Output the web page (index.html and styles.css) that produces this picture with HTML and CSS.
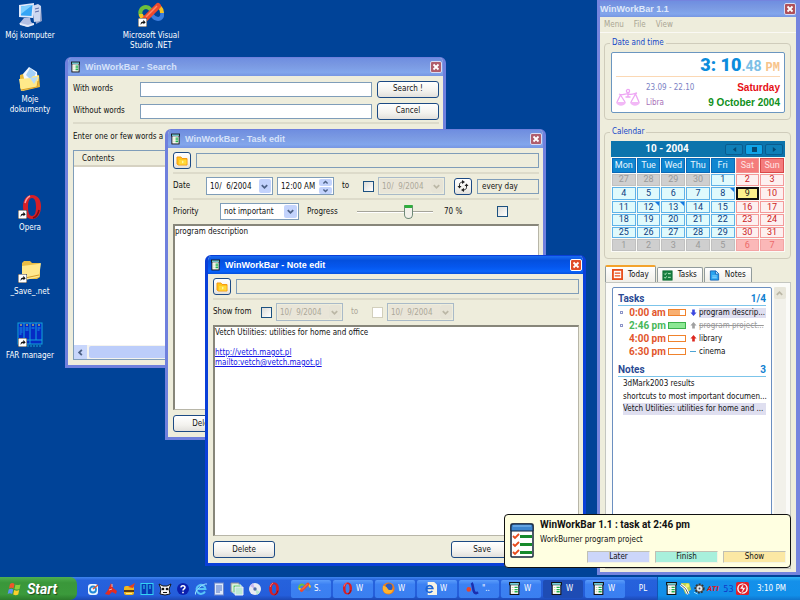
FILE: index.html
```
<!DOCTYPE html>
<html lang="en">
<head>
<meta charset="utf-8">
<title>WinWorkBar 1.1</title>
<link rel="stylesheet" href="styles.css">
</head>
<body>
<svg class="defs" aria-hidden="true">
  <symbol id="i-app" viewBox="0 0 10 12">
    <rect x="1" y="1" width="8" height="10.500" fill="#fff" stroke="#111"/>
    <rect x="0" y="0" width="10" height="3" fill="#111"/><rect x="1" y="1" width="8" height="1.500" fill="#7fe0e8"/>
    <path d="M2.500 5h1.500M2.500 7h1.500M2.500 9h1.500" stroke="#c9d9a0"/><path d="M5 5h3M5 7h3M5 9h3" stroke="#22b14c" stroke-width="1.300"/>
  </symbol>
  <symbol id="i-folder" viewBox="0 0 12 12">
    <path d="M1 2h4l1 1.500h5V10H2.500L1 9z" fill="#ffc61a" stroke="#f59a14"/><path d="M3 5h7.500v4.500H3z" fill="#ffd83a"/><path d="M6 5.500l2 1.500-2 1.500z" fill="#fff6a0"/>
  </symbol>
  <symbol id="i-x" viewBox="0 0 10 10"><path d="M2.500 2.500l5 5M7.500 2.500l-5 5" stroke="#fff" stroke-width="1.800"/></symbol>
  <symbol id="i-down" viewBox="0 0 10 10"><path d="M2 3.500l3 3 3-3" fill="none" stroke="currentColor" stroke-width="2"/></symbol>
  <symbol id="i-link" viewBox="0 0 10 10"><rect width="10" height="10" fill="#fff" stroke="#222"/><path d="M3 8c-.5-3 1-4 3-4V2l2.500 3L6 7V5.500C4.500 5.500 3.500 6.500 3 8z" fill="#111"/></symbol>
  <symbol id="i-pc" viewBox="0 0 26 26">
    <path d="M17 6l7-2 1 15-6 3z" fill="#8f9fc8"/><path d="M15 4l6-2 3 2-1 15-6 1z" fill="#cdd8f0"/><path d="M18 7l4-1M18 10l4-1" stroke="#5a6ca8"/>
    <path d="M2 3l15-2-1 15L2 15z" fill="#dfe9fb"/><path d="M4 4.500L15.500 3l-1 11L4 13.500z" fill="#35a5f5"/><path d="M4 4.500L15.500 3 4 12z" fill="#7fd0ff"/>
    <path d="M7 16h6l1 4 3 2-7 3-8-3z" fill="#b3bfe3"/><path d="M3 21l8 2 6-2v2l-6 2-8-2z" fill="#e2e8f8"/>
  </symbol>
  <symbol id="i-docs" viewBox="0 0 26 26">
    <path d="M3 9l6-2 2 3 11-1 1 12-17 4-3-3z" fill="#e8b93a"/><path d="M12 1l8 5 1 12-12 3L6 8z" fill="#f4f8ff"/><path d="M13 2l6 5-4 8-6-6z" fill="#a4d0f8"/>
    <path d="M2 13l12-1 2-2h6l-2 11-16 4z" fill="#ffe98a"/><path d="M4 24l16-3 1-6" fill="none" stroke="#d99c22"/><path d="M13 12l8-1-4 7z" fill="#b9dcf8"/>
  </symbol>
  <symbol id="i-vs" viewBox="0 0 26 26">
    <g fill="none" stroke-width="4"><path d="M3 14C1 9 4 5 8 5c3 0 4 2 6 4" stroke="#6cbf3c"/><path d="M14 13c2 3 4 4 6 4 3 0 5-3 4-7" stroke="#3b7ddd"/><path d="M3 12c0 4 4 5 7 2" stroke="#f7c21f"/><path d="M18 5c3-1 6 1 6 6" stroke="#f7c21f"/></g>
    <path d="M7 17L20 4" stroke="#ee4a2d" stroke-width="6" stroke-linecap="round"/><path d="M8 15L19 4" stroke="#ff8a66" stroke-width="1.500"/>
  </symbol>
  <symbol id="i-opera" viewBox="0 0 26 26">
    <path fill-rule="evenodd" d="M15 1c6 0 9 5 9 11.500S21 25 15 25 6 19 6 12.500 9 1 15 1zm0 3c-3 0-4 4-4 9s1 9 4 9 4-4 4-9-1-9-4-9z" fill="#d81f26"/><path d="M8 9c1-4 3-6 5-7" stroke="#ff9a9a" stroke-width="1.500" fill="none"/><path d="M22 16c-1 5-3 7-6 8" stroke="#7d0c12" stroke-width="1.500" fill="none"/>
  </symbol>
  <symbol id="i-save" viewBox="0 0 26 26">
    <path d="M5 5l2-2h6l2 2h8v14l-3 2H5z" fill="#e9bd45"/><path d="M5 8l16-2 3-1-2 14-14 3-3-2z" fill="#ffe88d"/><path d="M8 20l14-3" stroke="#d39c2b"/>
  </symbol>
  <symbol id="i-far" viewBox="0 0 26 26">
    <rect x="1" y="1" width="24" height="21" fill="#052cc4" stroke="#12a4da"/><path d="M7 1v17M13 1v21M19 1v17M1 18h24" stroke="#16a4dc"/><path d="M3 3h2M9 3h2M15 3h2M21 3h2" stroke="#ffe14a"/>
    <path d="M2.500 6h3M2.500 8h3M2.500 10h3M2.500 12h2M8.500 6h3M8.500 8h3M14.500 6h3M20.500 6h3M20.500 8h2" stroke="#1d9bf0"/><path d="M1 24h24" stroke="#1b9fd8" stroke-dasharray="2 1"/>
  </symbol>
  <symbol id="i-flag" viewBox="0 0 16 16">
    <path d="M3 3c2-1.500 3-1 4.500 0L6.500 7.500C5 6.500 4 6.500 2 7.500z" fill="#f0562a"/><path d="M8.500 3.500c2 1 3 .5 5 0L12.500 8c-2 .7-3 .7-5 0z" fill="#8ccf3c"/><path d="M1.700 8.500c2-1 3-1 4.500 0l-1 4.500c-2-1-3-1-4.500 0z" fill="#5a94f5"/><path d="M7.200 9c2 1 3 1 5 0l-1 4.500c-2 1-3 .8-5 0z" fill="#fbd02c"/>
  </symbol>
  <symbol id="i-mail" viewBox="0 0 14 14"><rect x="2" y="2" width="10" height="11" rx="3" fill="#e8f4ff"/><circle cx="7" cy="7.500" r="3" fill="none" stroke="#1f88d8" stroke-width="1.800"/><path d="M7 7l5-4" stroke="#e8542c" stroke-width="1.500"/></symbol>
  <symbol id="i-red" viewBox="0 0 14 14"><path d="M7 1l2 5 4 3-1 3-4-2-3 3-4-1 3-4z" fill="#e22c22"/><path d="M5 8l3-1M8 2v3" stroke="#ffb0a0"/></symbol>
  <symbol id="i-burn" viewBox="0 0 14 14"><rect x="2" y="4" width="10" height="9" rx="2" fill="#f1b91e"/><path d="M2 8h10v2H2z" fill="#5a3a12"/><path d="M6 5l7-4-2 5z" fill="#e53f1f"/><path d="M4 11.500h6" stroke="#ffe88a"/></symbol>
  <symbol id="i-panels" viewBox="0 0 14 14"><rect x="1" y="1.500" width="12" height="11" fill="#0838b8" stroke="#35d4f4"/><path d="M7 1v12M3 4h2M3 6h2M9 4h2M9 6h2" stroke="#35d4f4"/></symbol>
  <symbol id="i-cow" viewBox="0 0 14 14"><path d="M1 2l4 2h4l4-2-2 5 1 5-5 1-5-1 1-5z" fill="#f3f3f3" stroke="#151515"/><circle cx="5" cy="7" r="1.300" fill="#111"/><circle cx="9" cy="7" r="1.300" fill="#111"/><path d="M5 10.500h4" stroke="#111"/></symbol>
  <symbol id="i-help" viewBox="0 0 14 14"><circle cx="7" cy="7" r="6" fill="#0b1fae"/><path d="M5 5.500c0-2.500 4-2.500 4 0 0 1.300-2 1.500-2 3M7 9.700v1.600" fill="none" stroke="#fff" stroke-width="1.500"/></symbol>
  <symbol id="i-ie" viewBox="0 0 14 14"><path d="M11 9.500A4.500 4.500 0 1 1 11.500 7H4" fill="none" stroke="#58c4f8" stroke-width="2"/><path d="M1.500 12.500C0 9 9 1 13 2" fill="none" stroke="#9fe0ff"/></symbol>
  <symbol id="i-note" viewBox="0 0 14 14"><rect x="2.500" y="1" width="9" height="12" fill="#dce8fb" stroke="#6c86c8"/><path d="M4 4h6M4 6h6M4 8h6M4 10h4" stroke="#4c72c8"/></symbol>
  <symbol id="i-pics" viewBox="0 0 14 14"><path d="M1 1h8v9H1z" fill="#d8e8c8" stroke="#889"/><path d="M3 3h8v8H3z" fill="#60c068" stroke="#dfe"/><path d="M5 5h8v8H5z" fill="#bce8d4" stroke="#eef"/></symbol>
  <symbol id="i-cd" viewBox="0 0 14 14"><circle cx="7" cy="7" r="6" fill="#e9ecf2"/><path d="M7 7L2 4l3-3z" fill="#c8b8f0"/><path d="M7 7l5 3-3 3z" fill="#b8e8d0"/><circle cx="7" cy="7" r="1.700" fill="#5470a8"/></symbol>
  <symbol id="i-fox" viewBox="0 0 14 14"><circle cx="7" cy="7" r="6.500" fill="#ee7d18"/><circle cx="7.500" cy="5.500" r="3.800" fill="#2a5cc4"/><path d="M1 4c2 0 4 1 5 3s3 2 6 1c-1 6-10 6-11 0z" fill="#ffb32c"/></symbol>
  <symbol id="i-page" viewBox="0 0 14 14"><path d="M4 0h7l3 3v11H4z" fill="#f7f4e4"/><path d="M9 9.500A3.600 3.600 0 1 1 9.500 7H3" fill="none" stroke="#1c66d8" stroke-width="1.800"/></symbol>
  <symbol id="i-lambda" viewBox="0 0 14 14"><path d="M6 1c2 2 1 7 3 10 1 1.500 2.500 1 4 0" fill="none" stroke="#1a2fb0" stroke-width="2.800"/><circle cx="3" cy="8" r="2.500" fill="#e8452c"/></symbol>
  <symbol id="i-tool" viewBox="0 0 14 14"><path d="M2 1h9l2 7-6 5z" fill="#b9cf52"/><path d="M2 3l5 4 3 6" stroke="#fff" stroke-width="3" fill="none"/><path d="M2 3l5 4 3 6" stroke="#555" fill="none"/><circle cx="9" cy="4" r="2" fill="#f3ef6e"/></symbol>
  <symbol id="i-gear" viewBox="0 0 14 14"><circle cx="7" cy="7" r="4.500" fill="#6c7478" stroke="#333" stroke-width="2" stroke-dasharray="2 1.300"/><circle cx="7" cy="7" r="3" fill="#dfe6ea"/><circle cx="7" cy="7" r="1" fill="#445"/><path d="M1 11l4 2" stroke="#9fe8ff"/></symbol>
  <symbol id="i-zap" viewBox="0 0 14 14"><rect width="14" height="14" rx="2" fill="#e0202a"/><circle cx="7" cy="7" r="5" fill="none" stroke="#fff" stroke-width="1.500"/><path d="M9 0L4 7.500H7L5 14 10.500 6H7.500z" fill="#fff" stroke="#e0202a" stroke-width=".6"/></symbol>
  <symbol id="i-scales" viewBox="0 0 24 20"><g fill="none" stroke="#eea6f4" stroke-width="1.300"><circle cx="12" cy="3" r="1.600"/><path d="M3 6c4 2 5-1 9 0 4 1 5 0 9-1M12 4.500V9M9.500 9h5M4.500 7L1 14M4.500 7L9 14M19.500 6L15 14M19.500 6L23 14"/></g><path d="M0 14h10c-1 5-9 5-10 0zM14 14h10c-1 5-9 5-10 0z" fill="#f2b8f6"/></symbol>
  <symbol id="i-today" viewBox="0 0 12 12"><rect x="1" y="1" width="10" height="10" fill="#fff" stroke="#e8501c" stroke-width="2"/><path d="M3 4.500h6M3 7.500h6" stroke="#e8501c" stroke-width="1.500"/></symbol>
  <symbol id="i-tasks" viewBox="0 0 12 12"><rect x="1" y="1" width="10" height="10" fill="#178040" stroke="#0b6b32"/><path d="M2.500 4l1 1 1.500-2M2.500 8l1 1 1.500-2M6.500 4h3M6.500 8h3" fill="none" stroke="#c8f4d0"/></symbol>
  <symbol id="i-notes" viewBox="0 0 12 12"><path d="M1.500 1h6L10.500 4v7h-9z" fill="#28a4f0" stroke="#1264b8"/><path d="M7 1v3.500h3.500" fill="#dff2ff" stroke="#1264b8"/><path d="M3.500 6.500h5M3.500 8.500h5" stroke="#9bdcff"/></symbol>
  <symbol id="i-arrow" viewBox="0 0 8 8"><path d="M4 0l3.500 4H5.500v3.500h-3V4H.5z" fill="currentColor"/></symbol>
  <symbol id="i-alert" viewBox="0 0 24 36">
    <rect x="1" y="2" width="22" height="33" rx="1" fill="#fff" stroke="#15233a" stroke-width="1.500"/><path d="M1 9V5c0-2 1-3 3-3h16c2 0 3 1 3 3v4z" fill="#3d86cf" stroke="#15233a"/><path d="M3 4h18" stroke="#8cc2f2"/>
    <path d="M10 14.500h12M10 22.500h12M10 30.500h12" stroke="#178a2c" stroke-width="3"/><path d="M3 14l2 2 4-4M3 22l2 2 4-4M3 30l2 2 4-4" fill="none" stroke="#e84a1c" stroke-width="1.800"/>
  </symbol>
  <symbol id="i-repeat" viewBox="0 0 12 12"><g fill="none" stroke="#222"><path d="M2.500 7V4.500C2.500 3 4 2 6 2M9.500 5v2.500C9.500 9 8 10 6 10"/></g><path d="M5 0l3 2-3 2zM7 8l-3 2 3 2zM.5 6h4l-2 2.500zM7.500 6h4l-2-2.500z" fill="#222"/></symbol>
</svg>

<div class="screen">
  <main class="desktop">
    <div class="shortcuts">
      <a class="shortcut" href="#"><svg class="big"><use href="#i-pc"/></svg><span>Mój komputer</span></a>
      <a class="shortcut" href="#"><svg class="big"><use href="#i-vs"/></svg><svg class="mark"><use href="#i-link"/></svg><span>Microsoft Visual Studio .NET</span></a>
      <a class="shortcut first" href="#"><svg class="big"><use href="#i-docs"/></svg><span>Moje<br>dokumenty</span></a>
      <a class="shortcut first row4" href="#"><svg class="big"><use href="#i-opera"/></svg><svg class="mark"><use href="#i-link"/></svg><span>Opera</span></a>
      <a class="shortcut first row5" href="#"><svg class="big"><use href="#i-save"/></svg><svg class="mark"><use href="#i-link"/></svg><span>_Save_.net</span></a>
      <a class="shortcut first row6" href="#"><svg class="big"><use href="#i-far"/></svg><svg class="mark"><use href="#i-link"/></svg><span>FAR manager</span></a>
    </div>

    <section class="window search">
      <header class="title"><svg class="app"><use href="#i-app"/></svg><h2>WinWorkBar - Search</h2><button class="close" aria-label="Close"><svg><use href="#i-x"/></svg></button></header>
      <form class="body">
        <div class="row find"><label for="with">With words</label><input class="field" id="with" type="text"><button class="btn" type="button">Search !</button></div>
        <div class="row find"><label for="without">Without words</label><input class="field" id="without" type="text"><button class="btn" type="button">Cancel</button></div>
        <hr>
        <p class="hint">Enter one or few words a</p>
        <div class="results">
          <div class="colhead">Contents</div>
          <div class="void"></div>
          <div class="hscroll"><button type="button" aria-label="Scroll left"><svg class="turn"><use href="#i-down"/></svg></button><i></i></div>
        </div>
      </form>
    </section>

    <section class="window task">
      <header class="title"><svg class="app"><use href="#i-app"/></svg><h2>WinWorkBar - Task edit</h2><button class="close" aria-label="Close"><svg><use href="#i-x"/></svg></button></header>
      <form class="body">
        <div class="row"><button class="btn tool" type="button" aria-label="Folder"><svg><use href="#i-folder"/></svg></button><input class="field flat" type="text" aria-label="Category"></div>
        <hr>
        <div class="row">
          <label class="lead" for="d1">Date</label>
          <span class="combo"><input id="d1" type="text" value="10/  6/2004"><button type="button" aria-label="Pick date"><svg><use href="#i-down"/></svg></button></span>
          <span class="combo time"><input type="text" value="12:00 AM" aria-label="Time"><span class="spin"><button type="button" aria-label="Up"><svg class="flip"><use href="#i-down"/></svg></button><button type="button" aria-label="Down"><svg><use href="#i-down"/></svg></button></span></span>
          <label class="to" for="c1">to</label><input id="c1" type="checkbox">
          <span class="combo off"><input type="text" value="10/  9/2004" aria-label="End date" disabled><button type="button" aria-label="Pick date" disabled><svg><use href="#i-down"/></svg></button></span>
          <button class="btn tool repeat" type="button" aria-label="Repeat"><svg><use href="#i-repeat"/></svg></button>
          <input class="field flat" type="text" value="every day" aria-label="Repeat rule">
        </div>
        <hr>
        <div class="row">
          <label class="lead wide" for="prio">Priority</label>
          <span class="picker"><select id="prio"><option>not important</option></select><svg><use href="#i-down"/></svg></span>
          <label class="prog" for="pr">Progress</label><input id="pr" type="range" min="0" max="100" value="70">
          <output for="pr">70 %</output><input class="done" type="checkbox" aria-label="Done">
        </div>
        <textarea class="memo" aria-label="Description">program description</textarea>
        <div class="row foot"><button class="btn" type="button">Delete</button><button class="btn" type="button">Save</button></div>
      </form>
    </section>

    <section class="window note">
      <header class="title"><svg class="app"><use href="#i-app"/></svg><h2>WinWorkBar - Note edit</h2><button class="close" aria-label="Close"><svg><use href="#i-x"/></svg></button></header>
      <form class="body">
        <div class="row"><button class="btn tool" type="button" aria-label="Folder"><svg><use href="#i-folder"/></svg></button><input class="field flat" type="text" aria-label="Category"></div>
        <hr>
        <div class="row">
          <label class="from" for="c2">Show from</label><input id="c2" type="checkbox">
          <span class="combo off"><input type="text" value="10/  9/2004" aria-label="Start date" disabled><button type="button" aria-label="Pick date" disabled><svg><use href="#i-down"/></svg></button></span>
          <label class="to dim" for="c3">to</label><input id="c3" type="checkbox" disabled>
          <span class="combo off"><input type="text" value="10/  9/2004" aria-label="End date" disabled><button type="button" aria-label="Pick date" disabled><svg><use href="#i-down"/></svg></button></span>
        </div>
        <div class="memo"><p>Vetch Utilities: utilities for home and office</p><p>&nbsp;</p><p><a href="#">http://vetch.magot.pl</a></p><p><a href="#">mailto:vetch@vetch.magot.pl</a></p></div>
        <div class="row foot"><button class="btn" type="button">Delete</button><span class="grow"></span><button class="btn" type="button">Save</button><button class="btn" type="button">Cancel</button></div>
      </form>
    </section>
  </main>

  <aside class="sidebar">
    <header class="title"><h1>WinWorkBar 1.1</h1><button class="close" aria-label="Close"><svg><use href="#i-x"/></svg></button></header>
    <nav class="menu"><button>Menu</button><button>File</button><button>View</button></nav>
    <div class="panel">
      <fieldset><legend>Date and time</legend>
        <div class="clock">
          <time class="lcd"><b>3: 10</b><span>.48</span><small>PM</small></time>
          <div class="zodiac"><svg><use href="#i-scales"/></svg>
            <p class="sign"><span>23.09 - 22.10</span><em>Libra</em></p>
            <p class="today"><b>Saturday</b><strong>9 October 2004</strong></p></div>
        </div>
      </fieldset>
      <fieldset class="calbox"><legend>Calendar</legend>
        <div class="month"><b>10 - 2004</b><button aria-label="Previous month"><svg viewBox="0 0 6 6"><path d="M5 0v6L1 3z"/></svg></button><button class="on" aria-label="Today"><svg viewBox="0 0 6 6"><path d="M0 0h6v6H0z"/></svg></button><button aria-label="Next month"><svg viewBox="0 0 6 6"><path d="M1 0v6l4-3z"/></svg></button></div>
        <table class="cal">
          <thead><tr><th>Mon</th><th>Tue</th><th>Wed</th><th>Thu</th><th>Fri</th><th>Sat</th><th>Sun</th></tr></thead>
          <tbody>
            <tr><td class="o">27</td><td class="o">28</td><td class="o">29</td><td class="o">30</td><td>1</td><td>2</td><td>3</td></tr>
            <tr><td>4</td><td>5</td><td>6</td><td>7</td><td class="n">8</td><td class="now">9</td><td>10</td></tr>
            <tr><td>11</td><td class="n">12</td><td class="n">13</td><td>14</td><td>15</td><td>16</td><td>17</td></tr>
            <tr><td>18</td><td>19</td><td>20</td><td>21</td><td>22</td><td>23</td><td>24</td></tr>
            <tr><td>25</td><td>26</td><td>27</td><td>28</td><td>29</td><td>30</td><td>31</td></tr>
            <tr><td class="o">1</td><td class="o">2</td><td class="o">3</td><td class="o">4</td><td class="o">5</td><td class="o">6</td><td class="o">7</td></tr>
          </tbody>
        </table>
      </fieldset>
      <div class="tabs"><button class="sel"><svg><use href="#i-today"/></svg>Today</button><button><svg><use href="#i-tasks"/></svg>Tasks</button><button><svg><use href="#i-notes"/></svg>Notes</button></div>
      <div class="sheet">
        <div class="list">
          <h3>Tasks<span>1/4</span></h3>
          <ul class="tasks">
            <li><i class="dot"></i><b>0:00 am</b><i class="bar part"></i><svg class="down"><use href="#i-arrow"/></svg><span class="hot">program descrip...</span></li>
            <li class="ok"><i class="dot"></i><b>2:46 pm</b><i class="bar"></i><svg><use href="#i-arrow"/></svg><s>program project...</s></li>
            <li><i></i><b>4:00 pm</b><i class="bar"></i><svg class="up"><use href="#i-arrow"/></svg><span>library</span></li>
            <li><i></i><b>6:30 pm</b><i class="bar"></i><i class="dash"></i><span>cinema</span></li>
          </ul>
          <h3>Notes<span>3</span></h3>
          <ul class="notes"><li>3dMark2003 results</li><li>shortcuts to most important documen...</li><li class="hot">Vetch Utilities: utilities for home and ...</li></ul>
        </div>
        <div class="vscroll"><button aria-label="Scroll up"><svg class="flip"><use href="#i-down"/></svg></button></div>
      </div>
    </div>
  </aside>

  <section class="popup">
    <svg><use href="#i-alert"/></svg>
    <div><h2>WinWorkBar 1.1 : task at 2:46 pm</h2><p>WorkBurner program project</p>
    <div class="acts"><button class="later">Later</button><button class="finish">Finish</button><button class="show">Show</button></div></div>
  </section>
</div>

<footer class="taskbar">
  <button class="start"><svg><use href="#i-flag"/></svg>Start</button>
  <div class="quick">
    <svg><use href="#i-mail"/></svg><svg><use href="#i-red"/></svg><svg><use href="#i-burn"/></svg><svg><use href="#i-panels"/></svg><svg><use href="#i-cow"/></svg><svg><use href="#i-help"/></svg><svg><use href="#i-ie"/></svg><svg><use href="#i-note"/></svg><svg><use href="#i-pics"/></svg><svg><use href="#i-cd"/></svg><svg><use href="#i-opera"/></svg>
  </div>
  <div class="running">
    <button><svg><use href="#i-vs"/></svg>S.</button><button><svg><use href="#i-opera"/></svg>W</button><button><svg><use href="#i-fox"/></svg>W</button><button><svg><use href="#i-page"/></svg>W</button><button><svg><use href="#i-lambda"/></svg>"..</button><button><svg><use href="#i-app"/></svg>W</button><button class="cur"><svg><use href="#i-app"/></svg>W</button><button><svg><use href="#i-app"/></svg>W</button>
  </div>
  <span class="lang">PL</span>
  <div class="tray"><svg><use href="#i-app"/></svg><svg><use href="#i-tool"/></svg><svg><use href="#i-gear"/></svg><b class="ati">ATI</b><span class="temp">53</span><svg><use href="#i-zap"/></svg><time>3:10 PM</time></div>
</footer>
</body>
</html>
```
FILE: styles.css
```
:root {
  --face: #eeeddc;
  --edge: #7f9db9;
  --ui: "DejaVu Sans Condensed", "DejaVu Sans", sans-serif;
  --head: Roboto, "Liberation Sans", sans-serif;
}
* { box-sizing: border-box; margin: 0; padding: 0; }
body { min-height: 100vh; display: flex; flex-direction: column; background: #004398; color: #111; font: 8px/10px var(--ui); overflow: hidden; }
button, input, select, textarea { font: inherit; color: inherit; border: 0; background: none; appearance: none; min-width: 0; }
svg { display: block; flex: none; }
ul { list-style: none; }
i { font-style: normal; }
.defs { position: absolute; width: 0; height: 0; }

.screen { flex: 1; display: flex; position: relative; min-height: 0; }
.desktop { flex: 1; }

/* desktop shortcuts */
.shortcuts { display: grid; grid-template-columns: 60px 62px; grid-auto-rows: 64px; column-gap: 60px; padding-top: 2px; }
.shortcut { display: flex; flex-direction: column; align-items: center; gap: 3px; position: relative; color: #fff; text-align: center; text-decoration: none; }
.shortcut.first { grid-column: 1; }
.shortcut.row4 { grid-row: 4; }
.shortcut.row5 { grid-row: 5; }
.shortcut.row6 { grid-row: 6; }
.big { width: 26px; height: 26px; }
.mark { position: absolute; left: 18px; top: 16px; width: 9px; height: 9px; }

/* windows */
.window { position: absolute; width: 381px; height: 311px; display: flex; flex-direction: column; border: 3px solid #6f80dd; border-top-width: 1px; border-radius: 6px 6px 0 0; background: var(--face); overflow: hidden; }
.search { left: 65px; top: 57px; }
.task { left: 165px; top: 129px; }
.note { left: 205px; top: 255px; border-color: #0a3fd8; }
.title { display: flex; align-items: center; gap: 5px; height: 18px; padding: 0 1px 0 3px; background: linear-gradient(#6f8ee0, #7a99e2 40%, #82a6ec 80%, #7696e2); color: #d6e2fa; }
.title h1, .title h2 { flex: 1; font: bold 9px/12px "Liberation Sans", sans-serif; }
.note .title { background: linear-gradient(#1b6cf0, #0450de 25%, #0557ee 60%, #0863fb 85%, #0550dc); color: #fff; }
.app { width: 9px; height: 12px; }
.close { width: 12px; height: 12px; border: 1px solid #d8dcf4; border-radius: 2px; background: #b05d6c; }
.close svg { width: 10px; height: 10px; }
.note .close { border-color: #fff; background: #e04b27; }
.body { flex: 1; display: flex; flex-direction: column; padding: 4px 4px 5px 5px; min-height: 0; }
.row { display: flex; align-items: center; flex: none; }
hr { flex: none; height: 2px; border: 0; background: #dddbca; margin: 3px 0; }
.field { flex: 1; height: 15px; border: 1px solid var(--edge); background: #fff; padding: 0 4px; }
.field.flat { background: transparent; }
.btn { display: flex; align-items: center; justify-content: center; width: 62px; height: 17px; border: 1px solid #1c4a84; border-radius: 3px; background: linear-gradient(#fff, #f3f2ee 60%, #e2e0dc); text-align: center; }
.btn.tool { width: 18px; margin-right: 5px; }
.tool svg { width: 12px; height: 12px; }
input[type="checkbox"] { flex: none; width: 11px; height: 11px; border: 1px solid #1c5180; background: linear-gradient(135deg, #dcdcd7, #fff); }
input[type="checkbox"]:disabled { border-color: #d2cfbc; background: #fff; }

.find { height: 22px; }
.find label { width: 67px; }
.find .btn { margin-left: 5px; }
.find + hr { margin: 0 0 8px; }
.search .body { padding-top: 2px; }
.hint { white-space: nowrap; }
.results { flex: 1; display: flex; flex-direction: column; margin: 8px 0 0; border: 1px solid var(--edge); background: #fff; }
.colhead { height: 16px; padding: 3px 8px; background: var(--face); border-bottom: 2px solid #d6d2c2; }
.void { flex: 1; }
.hscroll { display: flex; height: 14px; background: #f4f3ee; }
.hscroll button { width: 13px; padding: 2px; background: #c8d6fb; color: #4d6185; }
.hscroll i { flex: 1; margin: 1px 0 1px 2px; background: #bccdfa; border-radius: 2px; }
.hscroll svg, .combo svg { width: 9px; height: 9px; }
.turn { transform: rotate(90deg); }
.flip { transform: rotate(180deg); }

.lead { width: 33px; }
.lead.wide { width: 47px; }
.combo { flex: none; display: flex; align-items: center; width: 67px; height: 18px; border: 1px solid var(--edge); background: #fff; padding: 1px; white-space: pre; }
.combo input { flex: 1; padding-left: 2px; height: 14px; white-space: pre; }
.combo button { flex: none; width: 12px; height: 14px; padding: 2px 1px; border-radius: 2px; background: #c3d3fc; color: #4d6185; }
.combo.time { width: 57px; margin-left: 4px; }
.spin { display: flex; flex-direction: column; gap: 1px; }
.combo .spin button { width: 13px; height: 7px; padding: 0 2px; }
.spin svg { height: 7px; }
.off { background: var(--face); color: #aca899; border-color: #a9bac8; }
.off input { background: #e9e5d8; }
.combo.off button { background: #e6e3d6; color: #bbb7a6; }
.to { width: 29px; padding-left: 8px; }
.to.dim { color: #aca899; }
input[type="checkbox"] + .combo { margin-left: 4px; }
.btn.repeat { margin-left: 9px; }
.picker { display: flex; align-items: center; position: relative; width: 79px; height: 17px; border: 1px solid var(--edge); background: #fff; }
.picker select { flex: 1; width: 100%; height: 15px; padding-left: 3px; }
.picker svg { position: absolute; right: 1px; top: 1px; width: 13px; height: 13px; padding: 2px; border-radius: 2px; background: #c3d3fc; color: #4d6185; pointer-events: none; }
.prog { margin-left: 8px; width: 50px; }
input[type="range"] { width: 76px; height: 17px; margin-right: 11px; }
input[type="range"]::-webkit-slider-runnable-track { height: 2px; background: #a5a49a; border-bottom: 1px solid #fff; }
input[type="range"]::-webkit-slider-thumb { appearance: none; width: 9px; height: 14px; margin-top: -6px; border: 1px solid #6f8a78; border-top: 3px solid #2fae3c; border-radius: 1px 1px 5px 5px; background: #f2f1ea; }
output { width: 53px; }
.memo { flex: 1; margin-top: 4px; border: 1px solid #b8b6a8; border-top: 2px solid #87867a; border-left: 2px solid #87867a; background: #fff; resize: none; line-height: 10px; }
.task .memo, .note .memo { padding-top: 1px; }
.memo a { color: #1414e6; }
.foot { padding-top: 5px; gap: 4px; }
.from { width: 48px; }
.grow { flex: 1; }

/* docked bar */
.sidebar { flex: none; width: 203px; display: flex; flex-direction: column; margin-bottom: 2px; border: solid #7484de; border-width: 1px 4px 3px 3px; background: var(--face); min-height: 0; }
.sidebar .title { height: 16px; padding: 0; color: #dfe8fb; }
.sidebar .close { background: #b05058; }
.menu { display: flex; gap: 10px; height: 16px; padding: 2px 4px; color: #aaa593; border-bottom: 1px solid #faf9f4; }
.panel { flex: 1; display: flex; flex-direction: column; padding: 5px 5px 3px 4px; min-height: 0; }
fieldset { flex: none; border: 1px solid #cfccbb; border-radius: 4px; padding: 4px 5px 6px 6px; }
legend { margin-left: -1px; padding: 0 2px; color: #1447c8; }
.clock { border: 1px solid #6b96c0; border-radius: 2px; background: #fff; padding: 2px 4px; height: 61px; }
.lcd { display: flex; justify-content: flex-end; align-items: baseline; height: 22px; border-bottom: 1px solid #fbd8b4; font: bold 18px/20px var(--head); color: #0c8cdc; }
.lcd b { white-space: pre; }
.lcd span { font-size: 14px; color: #7dbfe6; }
.lcd small { font: bold 12px/12px "Liberation Mono", monospace; color: #f7c48a; margin-left: 4px; }
.zodiac { display: flex; align-items: center; padding-top: 3px; }
.zodiac svg { width: 24px; height: 20px; margin-top: 6px; }
.sign, .today { display: flex; flex-direction: column; line-height: 15px; }
.sign { flex: 1; margin-left: 6px; color: #7b82c4; }
.sign em { font-style: normal; color: #a870b8; }
.today { text-align: right; font-family: "Liberation Sans", sans-serif; font-size: 10px; }
.today b { color: #e60f16; }
.today strong { color: #109020; }
.calbox { margin-top: 7px; }
.month { display: flex; align-items: center; gap: 2px; height: 16px; padding-right: 2px; background: #0c74ac; color: #fff; }
.month b { flex: 1; text-align: center; font: bold 10px/14px var(--head); }
.month button { display: flex; align-items: center; justify-content: center; width: 18px; height: 11px; border: 1px solid #0a5c90; border-radius: 2px; background: #0f7fb8; }
.month .on { background: #10a4e8; }
.month svg { width: 5px; height: 5px; fill: #064a74; }
.cal { width: 100%; height: 95px; table-layout: fixed; border-collapse: separate; border-spacing: 1px; background: #fbfbf7; text-align: center; font: 9px/9px var(--head); }
.cal th { height: 15px; border: 1px solid #0a68b8; background: #0f86d0; color: #e8f6ff; font-weight: normal; }
.cal td { position: relative; border: 1px solid #5fb2e8; background: #e0fafc; color: #0c3c80; }
.cal th:nth-child(n+6) { background: #f47c7c; border-color: #f09090; color: #ffe4e4; }
.cal th:last-child { border-color: #d84848; }
.cal td:nth-child(n+6) { border-color: #f49a9a; background: #fdf0f0; color: #cc1c24; }
.cal .o { border-color: #c0c0c0; background: #cfcfcf; color: #9a9a9a; }
.cal .o:nth-child(n+6) { background: #fbb8b8; border-color: #f4a4a4; color: #ec6a6a; }
.cal .now:nth-child(n+6) { border: 2px solid #111; background: #fdf08c; color: #222; }
.cal .n::after { content: ""; position: absolute; right: 0; top: 0; border: 2px solid; border-color: #1878e0 #1878e0 transparent transparent; }
.tabs { display: flex; align-items: flex-end; margin: 6px 0 0 1px; gap: 1px; }
.tabs button { display: flex; align-items: center; gap: 5px; height: 15px; padding: 0 5px 0 4px; border: 1px solid #919b9c; border-bottom: 0; border-radius: 2px 2px 0 0; background: linear-gradient(#fff, #f0efe8); }
.tabs .sel { height: 17px; padding: 0 6px; border-top: 2px solid #f3a32c; }
.tabs svg { width: 11px; height: 11px; }
.sheet { flex: 1; display: flex; gap: 2px; margin-left: 1px; padding: 4px 4px 4px 6px; border: 1px solid #c4c6c0; background: #fbfbf8; min-height: 0; }
.list { flex: 1; border: 1px solid #6b8fc0; border-radius: 2px; background: #fff; padding: 4px 5px; min-width: 0; }
.list h3 { display: flex; justify-content: space-between; border-bottom: 1px solid #7cc4ea; color: #2b4a94; font: bold 10px/13px var(--head); }
.list h3 span { color: #1080d0; }
.tasks { margin: 0 0 5px; }
.tasks li { display: grid; grid-template-columns: 9px 37px 18px 9px 1fr; align-items: center; column-gap: 2px; height: 13px; white-space: nowrap; }
.tasks b { font: bold 10px/12px var(--head); color: #e2562c; text-align: center; }
.tasks .ok b { color: #48b858; }
.tasks s { color: #9a9a9a; }
.dot { width: 3px; height: 3px; margin-left: 2px; border: 1px solid #8c94c8; }
.bar { height: 7px; border: 1px solid #f0822c; }
.bar.part { background: linear-gradient(90deg, #f8b072 70%, #fff 70%); }
.ok .bar { border-color: #3cb04c; background: #8ce894; }
.tasks svg { width: 7px; height: 7px; margin-left: 2px; color: #a0a0a0; }
.tasks .down { color: #3c48e0; transform: rotate(180deg); }
.tasks .up { color: #dc2820; }
.dash { width: 6px; height: 1px; margin-left: 2px; background: #4ca4d4; }
.hot { background: #dfdff0; }
.notes { margin-left: 5px; }
.notes li { height: 13px; line-height: 13px; white-space: nowrap; }
.notes .hot { line-height: 12px; height: 12px; }
.vscroll { width: 12px; background: #f2f1ea; }
.vscroll button { display: block; width: 12px; height: 12px; padding: 1px; background: #e8e6da; border-radius: 2px; color: #bbb7a6; }
.vscroll svg { width: 9px; height: 9px; }

/* reminder balloon */
.popup { position: absolute; right: 9px; bottom: 9px; display: flex; gap: 6px; width: 287px; height: 54px; padding: 4px 4px 4px 5px; border: 1px solid #111; border-radius: 4px; background: #ffffe1; }
.popup > svg { width: 24px; height: 36px; margin-top: 3px; }
.popup > div { flex: 1; }
.popup h2 { font: bold 10px/11px var(--head); }
.popup p { margin: 5px 0 6px; }
.acts { display: flex; justify-content: flex-end; gap: 5px; }
.acts button { width: 63px; height: 12px; line-height: 10px; border: 1px solid; border-color: #c0c0b4 #f4f4e4 #f4f4e4 #c0c0b4; }
.later { background: #ccd6fa; }
.finish { background: #a8f0dc; }
.show { background: #fbe8a4; }

/* taskbar */
.taskbar { flex: none; display: flex; align-items: center; height: 23px; background: linear-gradient(#3f86f0, #2662dc 14%, #245edb 80%, #1c48b4); color: #fff; z-index: 1; }
.start { display: flex; align-items: center; gap: 4px; width: 77px; height: 23px; padding-left: 7px; border-radius: 0 7px 7px 0; background: linear-gradient(#4fb050, #3a973a 25%, #3b9a3b 75%, #2b7a2b); font: italic bold 14px/20px var(--head); text-shadow: 1px 1px 1px #1d4d1d; }
.start svg { width: 16px; height: 16px; }
.quick { display: flex; gap: 4px; margin-left: 9px; }
.quick svg { width: 14px; height: 14px; }
.running { display: flex; flex: 1; gap: 2px; margin-left: 11px; }
.running button { display: flex; align-items: center; gap: 3px; flex: 0 1 40px; height: 18px; padding-left: 7px; border-radius: 2px; background: linear-gradient(#5a9cfa, #3c81f3 25%, #3a7ff0); white-space: nowrap; overflow: hidden; }
.running svg { width: 13px; height: 13px; }
.running .cur { background: #1e4cb4; }
.lang { flex: none; width: 28px; height: 15px; line-height: 15px; text-align: center; }
.tray { flex: none; display: flex; align-items: center; gap: 1px; height: 23px; width: 143px; padding-left: 7px; background: linear-gradient(#2fb4f4, #1490ea 18%, #118fe9 80%, #0f74cc); border-left: 1px solid #0f56b4; }
.tray svg { width: 13px; height: 13px; }
.ati { width: 14px; color: #e01818; font: italic bold 8px/10px var(--head); }
.temp { width: 13px; text-align: center; color: #1238c8; font-size: 9px; }
.tray time { margin-left: 7px; }
```
